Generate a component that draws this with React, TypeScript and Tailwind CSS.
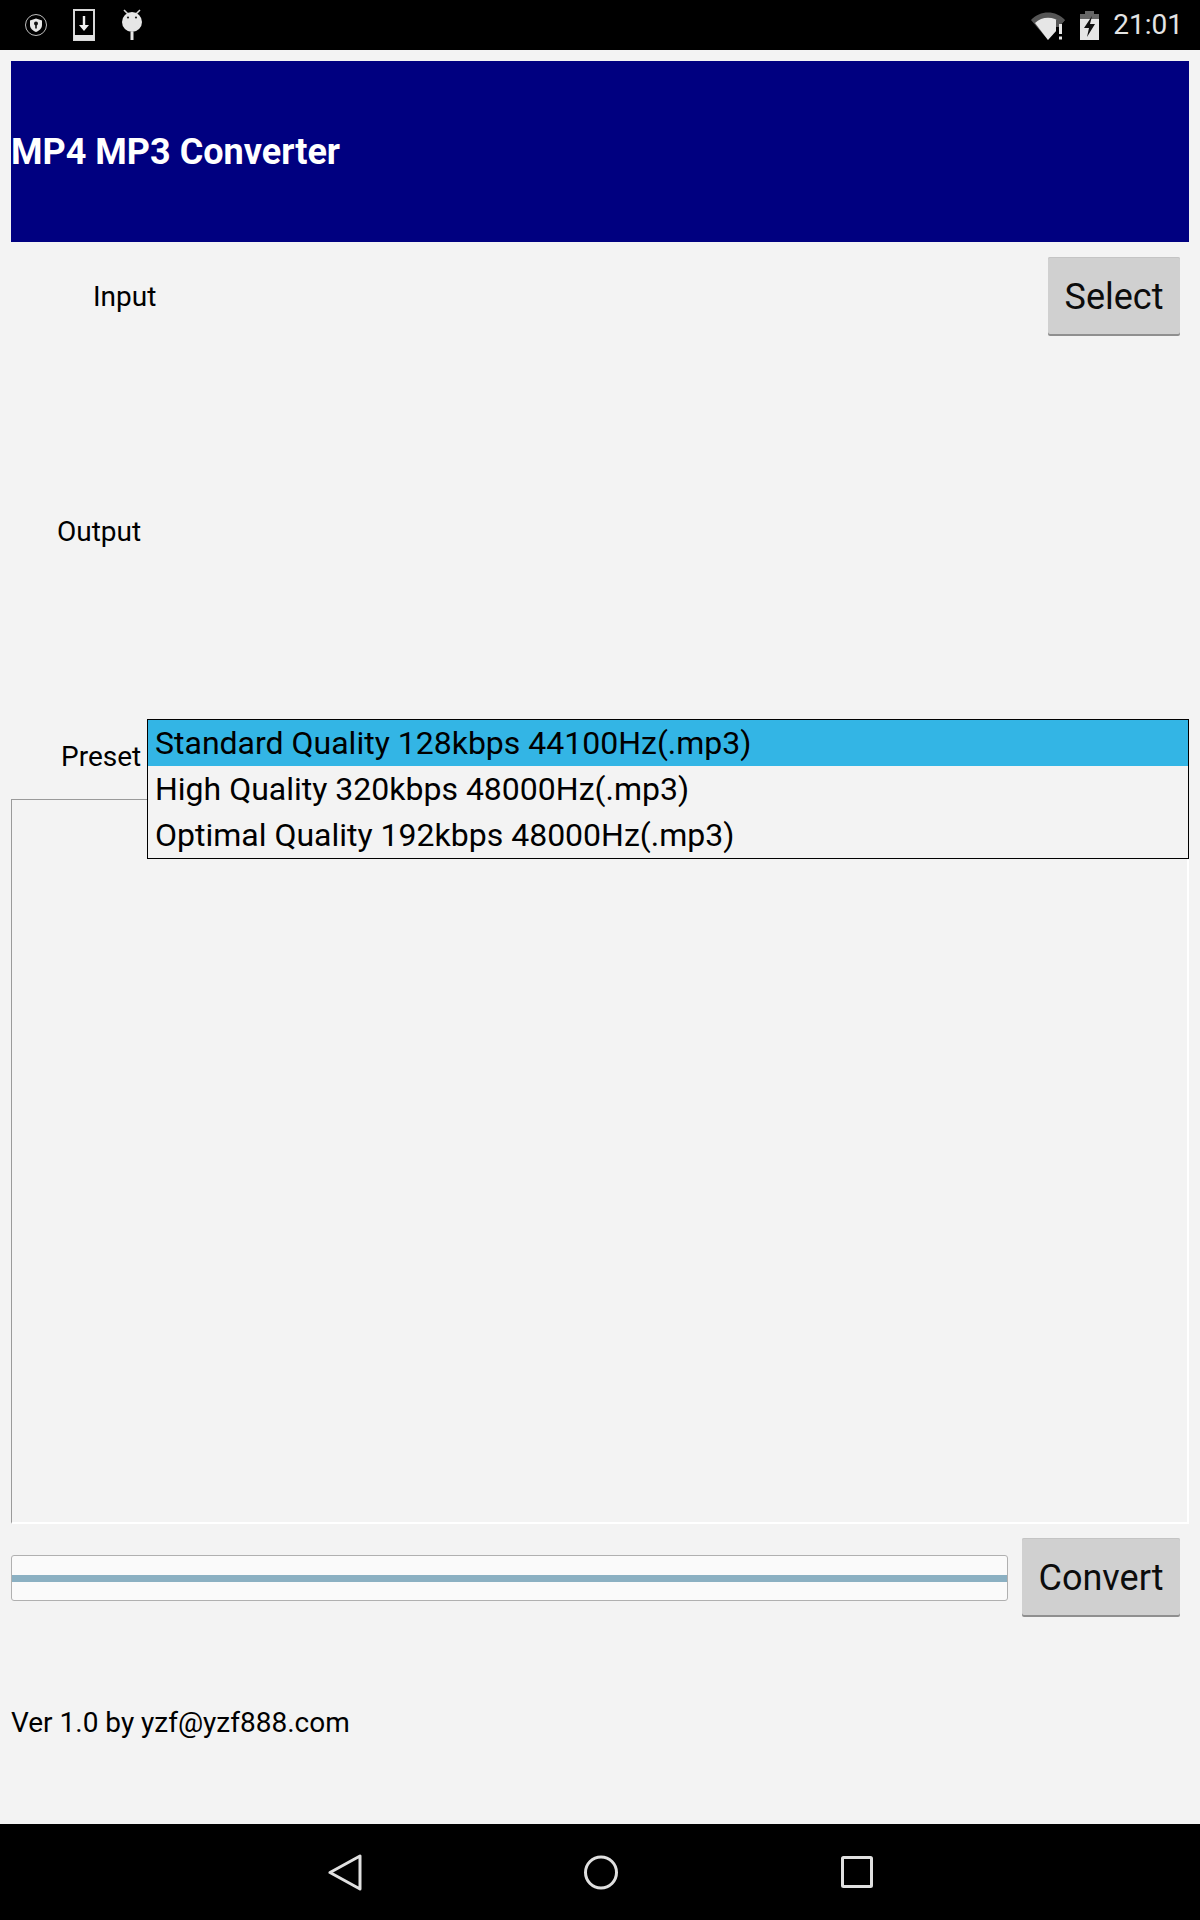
const presets = [
  'Standard Quality 128kbps 44100Hz(.mp3)',
  'High Quality 320kbps 48000Hz(.mp3)',
  'Optimal Quality 192kbps 48000Hz(.mp3)',
];

function StatusBar() {
  return (
    <div className="flex h-[50px] shrink-0 items-center justify-between bg-black pl-[25px] pr-[17px] text-[#e4e4e4]">
      <div className="flex items-center">
        <svg width="22" height="22" viewBox="0 0 22 22" className="mt-[-1px]">
          <circle cx="11" cy="11" r="10.5" fill="none" stroke="#bdbdbd" strokeWidth="1" />
          <path d="M11 4.5 L17 6.5 V11 C17 14.5 14.5 16.5 11 18 C7.5 16.5 5 14.5 5 11 V6.5 Z" fill="#e8e8e8" />
          <circle cx="11" cy="9.5" r="2" fill="#111" />
          <rect x="10.2" y="10" width="1.6" height="4.5" fill="#111" />
        </svg>
        <svg width="22" height="32" viewBox="0 0 22 32" className="ml-[26px]">
          <rect x="1" y="1" width="20" height="30" fill="none" stroke="#d8d8d8" strokeWidth="2" />
          <rect x="1" y="26" width="20" height="5" fill="#e4e4e4" />
          <path d="M9.8 7 H12.2 V16 H16 L11 22 L6 16 H9.8 Z" fill="#f0f0f0" />
        </svg>
        <svg width="22" height="32" viewBox="0 0 22 32" className="ml-[26px]">
          <path d="M3 1 L7 5 M19 1 L15 5" stroke="#d8d8d8" strokeWidth="1.6" fill="none" />
          <circle cx="11" cy="13" r="10" fill="#e6e6e6" />
          <circle cx="7" cy="8.5" r="1.1" fill="#222" />
          <circle cx="15" cy="8.5" r="1.1" fill="#222" />
          <rect x="9.5" y="23" width="3" height="8" fill="#e6e6e6" />
        </svg>
      </div>
      <div className="flex items-center">
        <svg width="34" height="29" viewBox="0 0 34 29" className="ml-[-1px]">
          <path d="M0 9 C9 -1 25 -1 34 9 L26 18 H17 V29 Z" fill="#555" />
          <path d="M4 12 C11 5 23 5 30 12 L26 17 V19 L17 29 Z" fill="#e6e6e6" />
          <path d="M25 12 H34 V29 H25 Z" fill="#000" />
          <path d="M25 9 L34 9 L28 16 H25 Z" fill="#555" />
          <rect x="28" y="13" width="3" height="10" fill="#e6e6e6" />
          <rect x="28" y="25.5" width="3" height="3" fill="#e6e6e6" />
        </svg>
        <svg width="19" height="29" viewBox="0 0 19 29" className="ml-[15px]">
          <rect x="5" y="0" width="9" height="4" fill="#666" />
          <rect x="0" y="3" width="19" height="6" fill="#666" />
          <rect x="0" y="8" width="19" height="21" fill="#e6e6e6" />
          <path d="M12 5 L4 17 H9 L7 26 L15 13 H10 Z" fill="#111" />
        </svg>
        <span className="ml-[14px] font-['Roboto',sans-serif] text-[28px] leading-none">21:01</span>
      </div>
    </div>
  );
}

function NavBar() {
  return (
    <div className="flex h-[96px] shrink-0 items-center justify-center bg-black">
      <svg width="34" height="37" viewBox="0 0 34 37">
        <path d="M2 18.5 L32 2 V35 Z" fill="none" stroke="#e0e0e0" strokeWidth="3" strokeLinejoin="round" />
      </svg>
      <svg width="34" height="35" viewBox="0 0 34 35" className="ml-[222px]">
        <circle cx="17" cy="17.5" r="15.5" fill="none" stroke="#e0e0e0" strokeWidth="3" />
      </svg>
      <svg width="32" height="32" viewBox="0 0 32 32" className="ml-[223px]">
        <rect x="1.5" y="1.5" width="29" height="29" rx="1" fill="none" stroke="#e0e0e0" strokeWidth="3" />
      </svg>
    </div>
  );
}

function GrayButton({ label, className }: { label: string; className: string }) {
  return (
    <div
      className={`flex items-center justify-center rounded-[2px] bg-[#d0d0d0] pt-[2px] font-['Roboto',sans-serif] text-[36px] text-[#0c0c0c] shadow-[0_1px_0_0_#c4c4c4_inset,0_2px_0_0_#8f8f8f] ${className}`}
    >
      {label}
    </div>
  );
}

export default function App() {
  return (
    <div className="flex h-[1920px] w-[1200px] flex-col overflow-hidden bg-[#f3f3f3] font-['Roboto',sans-serif] text-black">
      <StatusBar />
      <div className="flex min-h-0 flex-1 flex-col px-[11px]">
        <div className="mt-[11px] flex h-[181px] shrink-0 items-center bg-[#000080]">
          <span className="text-[36px] font-bold text-white">MP4 MP3 Converter</span>
        </div>

        <div className="flex h-[109px] shrink-0 items-center justify-between pr-[9px]">
          <span className="ml-[82px] text-[28px]">Input</span>
          <GrayButton label="Select" className="mt-[15px] h-[77px] w-[132px] self-start" />
        </div>

        <div className="flex h-[353px] shrink-0 items-center">
          <span className="ml-[46px] mt-[9px] text-[28px]">Output</span>
        </div>

        <div className="relative flex h-[90px] shrink-0 items-center">
          <span className="ml-[50px] mt-[15px] text-[28px]">Preset</span>
          <div className="absolute left-[136px] right-0 top-[15px] z-10 flex h-[140px] flex-col border border-black bg-[#f3f3f3] text-[32px]">
            {presets.map((p, i) => (
              <div key={p} className={`flex h-[46px] items-center pl-[7px] ${i === 0 ? 'bg-[#33b5e5]' : ''}`}>
                {p}
              </div>
            ))}
          </div>
        </div>

        <div className="mt-[5px] h-[725px] shrink-0 border-t border-r-2 border-b-2 border-l border-t-[#9a9a9a] border-r-white border-b-white border-l-[#9a9a9a]" />

        <div className="mt-[14px] flex shrink-0 items-start">
          <div className="mt-[17px] flex h-[46px] w-[997px] items-center rounded-[3px] border border-[#b0b0b0] bg-[#fafafa]">
            <div className="h-[7px] w-full bg-[#8bb0c2]" />
          </div>
          <GrayButton label="Convert" className="ml-[14px] h-[77px] w-[158px]" />
        </div>

        <div className="mt-[92px] text-[28px] leading-[32px]">Ver 1.0 by yzf@yzf888.com</div>
      </div>
      <NavBar />
    </div>
  );
}
